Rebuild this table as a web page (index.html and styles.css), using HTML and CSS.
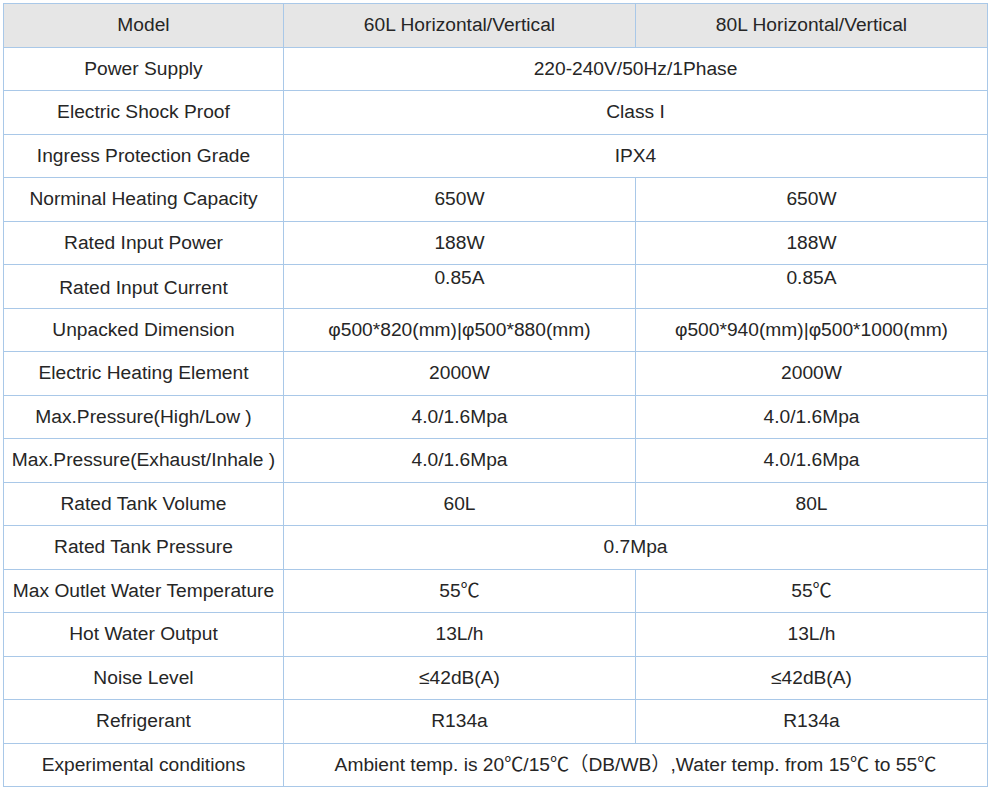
FILE: index.html
```html
<!DOCTYPE html>
<html>
<head>
<meta charset="utf-8">
<link rel="stylesheet" href="styles.css">
</head>
<body>
<table class="spec">
  <colgroup>
    <col class="c-label">
    <col class="c-val">
    <col class="c-val">
  </colgroup>
  <thead>
    <tr class="head"><th>Model</th><th>60L Horizontal/Vertical</th><th>80L Horizontal/Vertical</th></tr>
  </thead>
  <tbody>
    <tr><td>Power Supply</td><td colspan="2">220-240V/50Hz/1Phase</td></tr>
    <tr><td>Electric Shock Proof</td><td colspan="2">Class I</td></tr>
    <tr><td>Ingress Protection Grade</td><td colspan="2">IPX4</td></tr>
    <tr><td>Norminal Heating Capacity</td><td>650W</td><td>650W</td></tr>
    <tr><td>Rated Input Power</td><td>188W</td><td>188W</td></tr>
    <tr class="shifted"><td class="low">Rated Input Current</td><td class="high">0.85A</td><td class="high">0.85A</td></tr>
    <tr><td>Unpacked Dimension</td><td>φ500*820(mm)|φ500*880(mm)</td><td>φ500*940(mm)|φ500*1000(mm)</td></tr>
    <tr><td>Electric Heating Element</td><td>2000W</td><td>2000W</td></tr>
    <tr><td>Max.Pressure(High/Low )</td><td>4.0/1.6Mpa</td><td>4.0/1.6Mpa</td></tr>
    <tr><td>Max.Pressure(Exhaust/Inhale )</td><td>4.0/1.6Mpa</td><td>4.0/1.6Mpa</td></tr>
    <tr><td>Rated Tank Volume</td><td>60L</td><td>80L</td></tr>
    <tr><td>Rated Tank Pressure</td><td colspan="2">0.7Mpa</td></tr>
    <tr><td>Max Outlet Water Temperature</td><td>55℃</td><td>55℃</td></tr>
    <tr><td>Hot Water Output</td><td>13L/h</td><td>13L/h</td></tr>
    <tr><td>Noise Level</td><td>≤42dB(A)</td><td>≤42dB(A)</td></tr>
    <tr><td>Refrigerant</td><td>R134a</td><td>R134a</td></tr>
    <tr><td>Experimental conditions</td><td colspan="2">Ambient temp. is 20℃/15℃（DB/WB）,Water temp. from 15℃ to 55℃</td></tr>
  </tbody>
</table>
</body>
</html>
```
FILE: styles.css
```css
html, body {
  margin: 0;
  padding: 0;
  background: #ffffff;
}
body {
  padding: 3px;
  font-family: "Liberation Sans", Arial, "Noto Sans CJK SC", sans-serif;
  color: #262626;
}
.spec {
  border-collapse: collapse;
  width: 984px;
  height: 783px;
  table-layout: fixed;
  font-size: 19.2px;
}
.c-label { width: 280px; }
.c-val { width: 352px; }
.spec th,
.spec td {
  border: 1px solid #a9c8e8;
  text-align: center;
  vertical-align: middle;
  padding: 0 2px;
  font-weight: normal;
  white-space: nowrap;
  line-height: 22px;
}
.spec tr { height: 43.5px; }
.head th { background: #e6e6e6; }
.shifted .low { padding-top: 4px; }
.shifted .high { padding-bottom: 16px; }
```
